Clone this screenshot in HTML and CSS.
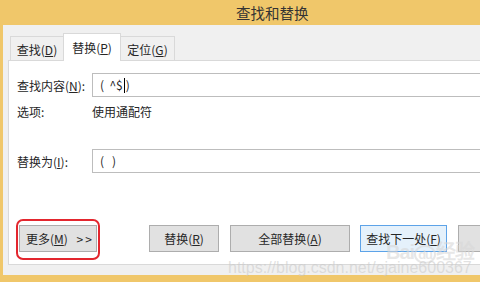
FILE: index.html
```html
<!DOCTYPE html>
<html lang="zh-CN">
<head>
    <meta charset="UTF-8">
    <meta name="viewport" content="width=device-width, initial-scale=1.0">
    <title>查找和替换</title>
    <link rel="stylesheet" href="styles.css">
</head>
<body>

    <div class="window">
        <div class="titlebar">查找和替换</div>
        <div class="dialog">
            <div class="tabs">
                <div class="tab tab-find">查找(<u>D</u>)</div>
                <div class="tab tab-active">替换(<u>P</u>)</div>
                <div class="tab tab-goto">定位(<u>G</u>)</div>
            </div>
            <div class="panel">
                <div class="field">
                    <label class="label">查找内容(<u>N</u>):</label>
                    <div class="input">(  ^$<span class="caret"></span>)</div>
                </div>
                <div class="options">
                    <span class="label">选项:</span>
                    <span>使用通配符</span>
                </div>
                <div class="field field-replace">
                    <label class="label">替换为(<u>I</u>):</label>
                    <div class="input">(   )</div>
                </div>
                <div class="buttons">
                    <button class="btn btn-more">更多(<u>M</u>) <span class="arrows">&gt;&gt;</span></button>
                    <button class="btn btn-replace">替换(<u>R</u>)</button>
                    <button class="btn btn-all">全部替换(<u>A</u>)</button>
                    <button class="btn btn-next">查找下一处(<u>F</u>)</button>
                    <button class="btn btn-cancel"></button>
                </div>
            </div>
        </div>
    </div>

    <!-- 截图上的标注和水印 -->
    <div class="highlight"></div>
    <div class="logo-mark">Bai<span class="paw">du</span>经验</div>
    <div class="url-mark">https://blog.csdn.net/ejaine600367</div>

</body>
</html>
```

FILE: styles.css
```css
body {
    margin: 0;
    width: 480px;
    height: 288px;
    overflow: hidden;
    position: relative;
    background: #fff;
    font-family: "Noto Sans CJK SC", "Liberation Sans", sans-serif;
    font-size: 12px;
    color: #262626;
}
u {
    text-decoration: underline;
    text-underline-offset: 1px;
}
.window {
    width: 480px;
    height: 282px;
    box-sizing: border-box;
    background: #f0c76a;
    padding: 0 0 7px 3px;
}
.titlebar {
    height: 25px;
    line-height: 25px;
    padding-left: 233px;
    font-size: 14.5px;
    color: #333;
}
.dialog {
    height: 250px;
    box-sizing: border-box;
    background: #f0f0f0;
    padding: 8px 0 0 5px;
}
.tabs {
    display: flex;
    align-items: flex-end;
    height: 27px;
    margin-left: 2px;
}
.tab {
    height: 24px;
    line-height: 26px;
    box-sizing: border-box;
    border: 1px solid #d9d9d9;
    border-bottom: none;
    background: #f0f0f0;
    text-align: center;
}
.tab-find {
    width: 53px;
    border-right: none;
}
.tab-goto {
    width: 54px;
    border-left: none;
}
.tab-active {
    width: 58px;
    height: 28px;
    line-height: 27px;
    margin-bottom: -1px;
    background: #fff;
    position: relative;
    z-index: 1;
}
.panel {
    height: 205px;
    box-sizing: border-box;
    background: #fff;
    border: 1px solid #d9d9d9;
    border-right: none;
    padding-left: 8px;
}
.field {
    display: flex;
    align-items: center;
    height: 24px;
    margin-top: 12px;
}
.field-replace {
    margin-top: 29px;
}
.label {
    width: 75px;
    flex-shrink: 0;
}
.input {
    flex: 1;
    height: 24px;
    line-height: 22px;
    box-sizing: border-box;
    border: 1px solid #bdbdbd;
    border-right: none;
    padding-left: 7px;
    white-space: pre;
}
.caret {
    display: inline-block;
    width: 1px;
    height: 15px;
    background: #000;
    vertical-align: -3px;
    margin: 0 1px;
}
.options {
    display: flex;
    align-items: center;
    height: 18px;
    margin-top: 5px;
}
.buttons {
    display: flex;
    margin-top: 52px;
    margin-left: 2px;
}
.btn {
    height: 27px;
    flex-shrink: 0;
    font-family: inherit;
    font-size: 12px;
    color: #262626;
    background: #e1e1e1;
    border: 1px solid #adadad;
    padding: 0;
    margin-right: 11px;
}
.btn-more {
    width: 78px;
    text-align: left;
    padding-left: 6px;
    margin-right: 52px;
}
.arrows {
    margin-left: 6px;
    letter-spacing: 2px;
}
.btn-replace {
    width: 70px;
}
.btn-all {
    width: 120px;
    margin-right: 10px;
}
.btn-next {
    width: 87px;
    background: #e5f1fb;
    border-color: #5da3e8;
}
.btn-cancel {
    width: 22px;
    margin-right: 0;
    border-right: none;
}
.highlight {
    position: absolute;
    left: 16px;
    top: 219px;
    width: 80px;
    height: 37px;
    border: 2px solid #e3262e;
    border-radius: 7px;
}
.logo-mark {
    position: absolute;
    left: 386px;
    top: 236px;
    font-family: "Liberation Sans", sans-serif;
    font-size: 20px;
    font-weight: bold;
    color: rgba(215, 215, 215, 0.6);
    letter-spacing: -1px;
}
.paw {
    font-size: 13px;
    border: 2px solid rgba(215, 215, 215, 0.6);
    border-radius: 50%;
    padding: 0 2px;
}
.url-mark {
    position: absolute;
    left: 228px;
    top: 259px;
    font-family: "Liberation Sans", sans-serif;
    font-size: 16px;
    color: rgba(200, 200, 200, 0.55);
}
```
